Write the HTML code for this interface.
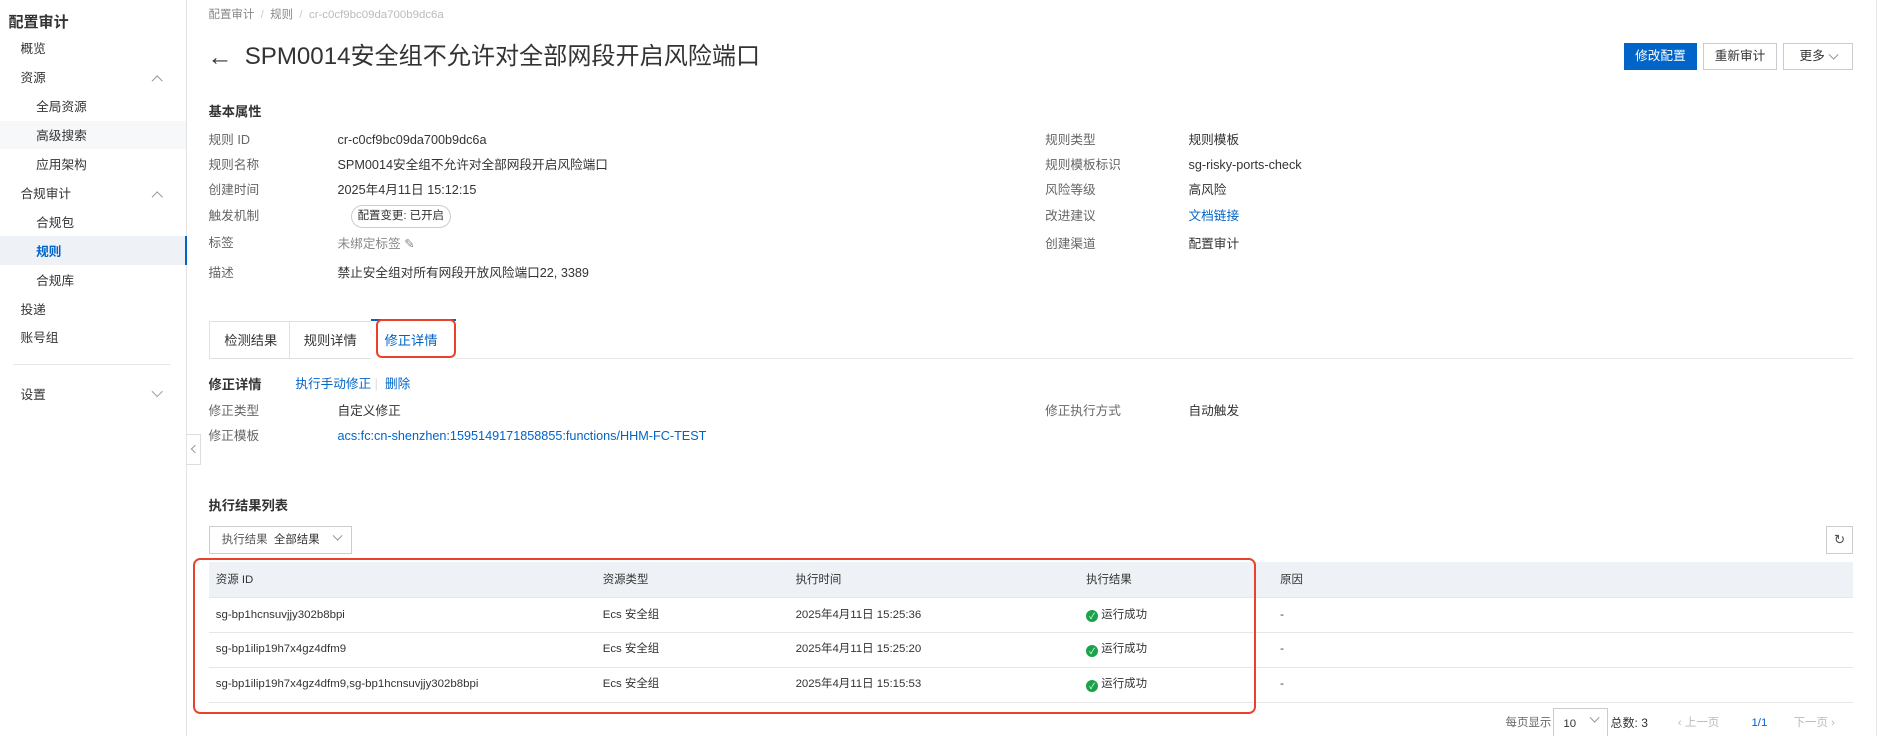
<!DOCTYPE html>
<html><head><meta charset="utf-8"><style>
*{box-sizing:border-box;margin:0;padding:0}
html,body{width:1890px;height:736px;overflow:hidden;background:#fff}
body{font-family:"Liberation Sans","Noto Sans CJK SC",sans-serif;color:#333}
#w{zoom:1.2054;width:1568px;height:611px;position:relative;overflow:hidden}
.a{position:absolute;white-space:nowrap;line-height:13px}
.s{font-size:10.5px}
.g{color:#666}
.b{font-weight:bold;color:#333}
.blue{color:#0064c8}
.side{position:absolute;left:0;top:0;width:155px;height:611px;border-right:1px solid #e3e3e3;background:#fff}
.chev{position:absolute;width:7px;height:7px;border-left:1.2px solid #999;border-top:1.2px solid #999}
.btn{position:absolute;height:22px;border:1px solid #c9ccd1;font-size:10.5px;text-align:center;line-height:20px;background:#fff;color:#333}
.hl{position:absolute;height:1px;background:#e6e6e6}
.t{font-size:9.5px}
.ok{display:inline-block;width:10px;height:10px;border-radius:50%;background:#1aa34a;color:#fff;font-size:7px;line-height:10px;text-align:center;vertical-align:-1px}
</style></head><body><div id="w">
<div class="side">
<div class="a b" style="left:7px;top:12px;font-size:12.5px;line-height:15px">配置审计</div>
<div class="a s" style="left:17px;top:35px">概览</div>
<div class="a s" style="left:17px;top:59px">资源</div><div class="chev" style="left:127px;top:64px;transform:rotate(45deg)"></div>
<div class="a s" style="left:30px;top:83px">全局资源</div>
<div style="position:absolute;left:0;top:100px;width:154px;height:24px;background:#f7f8fa"></div>
<div class="a s" style="left:30px;top:107px">高级搜索</div>
<div class="a s" style="left:30px;top:131px">应用架构</div>
<div class="a s" style="left:17px;top:155px">合规审计</div><div class="chev" style="left:127px;top:160px;transform:rotate(45deg)"></div>
<div class="a s" style="left:30px;top:179px">合规包</div>
<div style="position:absolute;left:0;top:196px;width:155px;height:24px;background:#eef1f6;border-right:2px solid #0064c8"></div>
<div class="a s b" style="left:30px;top:203px;color:#0064c8">规则</div>
<div class="a s" style="left:30px;top:227px">合规库</div>
<div class="a s" style="left:17px;top:251px">投递</div>
<div class="a s" style="left:17px;top:275px">账号组</div>
<div class="hl" style="left:11px;top:302px;width:130px"></div>
<div class="a s" style="left:17px;top:322px">设置</div><div class="chev" style="left:127px;top:321px;transform:rotate(225deg)"></div>
</div>
<div style="position:absolute;left:155px;top:360px;width:12px;height:26px;border:1px solid #ddd;border-left:none;background:#fff"></div>
<div class="chev" style="left:159px;top:370px;width:5px;height:5px;transform:rotate(-45deg)"></div>
<div style="position:absolute;left:1556px;top:0;width:1px;height:611px;background:#e6e6e6"></div>

<div class="a" style="left:173px;top:7px;font-size:9.5px;color:#888">配置审计 &nbsp;<span style="color:#ccc">/</span>&nbsp; 规则 &nbsp;<span style="color:#ccc">/</span>&nbsp; <span style="color:#bbb">cr-c0cf9bc09da700b9dc6a</span></div>
<div class="a" style="left:172px;top:36px;font-size:21px;line-height:24px;color:#333">←</div>
<div class="a" style="left:203px;top:36px;font-size:20px;line-height:24px;color:#333">SPM0014安全组不允许对全部网段开启风险端口</div>
<div class="btn" style="left:1347px;top:36px;width:61px;background:#0064c8;border-color:#0064c8;color:#fff">修改配置</div>
<div class="btn" style="left:1413px;top:36px;width:61px">重新审计</div>
<div class="btn" style="left:1479px;top:36px;width:58px;text-align:left;padding-left:13px">更多</div>
<div class="chev" style="left:1518px;top:42px;width:6px;height:6px;transform:rotate(225deg)"></div>

<div class="a b" style="left:173px;top:86px;font-size:11px">基本属性</div>
<div class="a s g" style="left:173px;top:110px">规则 ID</div><div class="a s" style="left:280px;top:110px">cr-c0cf9bc09da700b9dc6a</div>
<div class="a s g" style="left:173px;top:131px">规则名称</div><div class="a s" style="left:280px;top:131px">SPM0014安全组不允许对全部网段开启风险端口</div>
<div class="a s g" style="left:173px;top:152px">创建时间</div><div class="a s" style="left:280px;top:152px">2025年4月11日 15:12:15</div>
<div class="a s g" style="left:173px;top:173px">触发机制</div>
<div class="a" style="left:291px;top:170px;width:83px;height:19px;border:1px solid #ccc;border-radius:10px;text-align:center;line-height:17px;font-size:9.5px">配置变更: 已开启</div>
<div class="a s g" style="left:173px;top:196px">标签</div><div class="a s" style="left:280px;top:197px;color:#888">未绑定标签 ✎</div>
<div class="a s g" style="left:173px;top:221px">描述</div><div class="a s" style="left:280px;top:221px">禁止安全组对所有网段开放风险端口22, 3389</div>

<div class="a s g" style="left:867px;top:110px">规则类型</div><div class="a s" style="left:986px;top:110px">规则模板</div>
<div class="a s g" style="left:867px;top:131px">规则模板标识</div><div class="a s" style="left:986px;top:131px">sg-risky-ports-check</div>
<div class="a s g" style="left:867px;top:152px">风险等级</div><div class="a s" style="left:986px;top:152px">高风险</div>
<div class="a s g" style="left:867px;top:173px">改进建议</div><div class="a s blue" style="left:986px;top:173px">文档链接</div>
<div class="a s g" style="left:867px;top:197px">创建渠道</div><div class="a s" style="left:986px;top:197px">配置审计</div>

<div style="position:absolute;left:173px;top:266px;width:68px;height:32px;border:1px solid #e0e0e0;border-right:none;background:#fff"></div>
<div style="position:absolute;left:240px;top:266px;width:69px;height:32px;border:1px solid #e0e0e0;background:#fff"></div>
<div class="hl" style="left:378px;top:297px;width:1159px"></div>
<div style="position:absolute;left:308px;top:265px;width:70px;height:33px;border-top:2px solid #0064c8;background:#fff"></div>
<div class="a" style="left:186px;top:276px;font-size:11px">检测结果</div>
<div class="a" style="left:252px;top:276px;font-size:11px">规则详情</div>
<div class="a blue" style="left:319px;top:276px;font-size:11px">修正详情</div>
<div style="position:absolute;left:312px;top:265px;width:66px;height:32px;border:2px solid #e8422c;border-radius:5px"></div>

<div class="a b" style="left:173px;top:313px;font-size:11px">修正详情</div>
<div class="a s blue" style="left:245px;top:313px">执行手动修正 <span style="color:#ddd">|</span>&nbsp; 删除</div>
<div class="a s g" style="left:173px;top:335px">修正类型</div><div class="a s" style="left:280px;top:335px">自定义修正</div>
<div class="a s g" style="left:867px;top:335px">修正执行方式</div><div class="a s" style="left:986px;top:335px">自动触发</div>
<div class="a s g" style="left:173px;top:356px">修正模板</div><div class="a s blue" style="left:280px;top:356px">acs:fc:cn-shenzhen:1595149171858855:functions/HHM-FC-TEST</div>

<div class="a b" style="left:173px;top:413px;font-size:11px">执行结果列表</div>
<div style="position:absolute;left:173px;top:436px;width:119px;height:24px;border:1px solid #ccc"></div>
<div class="a t" style="left:184px;top:442px;color:#555">执行结果 &nbsp;<span style="color:#333">全部结果</span></div>
<div class="chev" style="left:277px;top:441px;width:6px;height:6px;transform:rotate(225deg)"></div>
<div style="position:absolute;left:1515px;top:436px;width:22px;height:24px;border:1px solid #ccc;font-size:11px;text-align:center;line-height:22px;color:#555">↻</div>

<div style="position:absolute;left:173px;top:466px;width:1364px;height:30px;background:#eef1f6;border-bottom:1px solid #e3e6ea"></div>
<div class="a t" style="left:179px;top:475px">资源 ID</div><div class="a t" style="left:500px;top:475px">资源类型</div><div class="a t" style="left:660px;top:475px">执行时间</div><div class="a t" style="left:901px;top:475px">执行结果</div><div class="a t" style="left:1062px;top:475px">原因</div>
<div class="hl" style="left:173px;top:524px;width:1364px"></div>
<div class="hl" style="left:173px;top:553px;width:1364px"></div>
<div class="hl" style="left:173px;top:582px;width:1364px"></div>
<div class="a t" style="left:179px;top:504px">sg-bp1hcnsuvjjy302b8bpi</div>
<div class="a t" style="left:179px;top:533px">sg-bp1ilip19h7x4gz4dfm9</div>
<div class="a t" style="left:179px;top:562px">sg-bp1ilip19h7x4gz4dfm9,sg-bp1hcnsuvjjy302b8bpi</div>
<div class="a t" style="left:500px;top:504px">Ecs 安全组</div><div class="a t" style="left:500px;top:533px">Ecs 安全组</div><div class="a t" style="left:500px;top:562px">Ecs 安全组</div>
<div class="a t" style="left:660px;top:504px">2025年4月11日 15:25:36</div><div class="a t" style="left:660px;top:533px">2025年4月11日 15:25:20</div><div class="a t" style="left:660px;top:562px">2025年4月11日 15:15:53</div>
<div class="a t" style="left:901px;top:504px"><span class="ok">✓</span> 运行成功</div>
<div class="a t" style="left:901px;top:533px"><span class="ok">✓</span> 运行成功</div>
<div class="a t" style="left:901px;top:562px"><span class="ok">✓</span> 运行成功</div>
<div class="a t" style="left:1062px;top:504px">-</div><div class="a t" style="left:1062px;top:533px">-</div><div class="a t" style="left:1062px;top:562px">-</div>
<div style="position:absolute;left:160px;top:463px;width:882px;height:129px;border:2px solid #e8422c;border-radius:6px"></div>

<div class="a t" style="left:1249px;top:594px;color:#666">每页显示</div>
<div style="position:absolute;left:1288px;top:587px;width:46px;height:26px;border:1px solid #ccc"></div>
<div class="a t" style="left:1297px;top:595px">10</div>
<div class="chev" style="left:1320px;top:592px;width:6px;height:6px;transform:rotate(225deg)"></div>
<div class="a" style="left:1336px;top:594px;font-size:10px">总数: 3</div>
<div class="a t" style="left:1392px;top:594px;color:#bbb">‹ 上一页</div>
<div class="a t blue" style="left:1453px;top:594px">1/1</div>
<div class="a t" style="left:1488px;top:594px;color:#bbb">下一页 ›</div>
</div></body></html>
